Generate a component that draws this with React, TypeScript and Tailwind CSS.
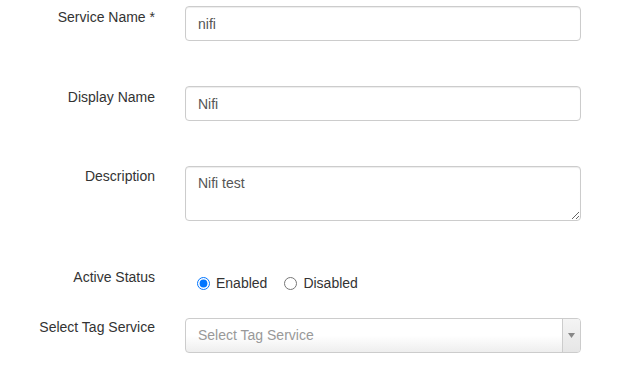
import React from "react";

const font = { fontFamily: '"Liberation Sans", Arial, sans-serif' };

export default function App() {
  return (
    <div className="w-[632px] h-[375px] bg-white overflow-hidden text-[14px] leading-[20px] text-[#333]" style={font}>
      {/* Service Name */}
      <div className="flex items-start mt-[6px]">
        <div className="w-[155px] text-right pt-[1px]">Service Name *</div>
        <input
          readOnly
          defaultValue="nifi"
          className="ml-[30px] w-[396px] h-[35px] px-[12px] border border-[#ccc] rounded-[4px] text-[#555] text-[14px] outline-none shadow-[inset_0_1px_1px_rgba(0,0,0,0.075)]"
          style={font}
        />
      </div>
      {/* Display Name */}
      <div className="flex items-start mt-[45px]">
        <div className="w-[155px] text-right pt-[1px]">Display Name</div>
        <input
          readOnly
          defaultValue="Nifi"
          className="ml-[30px] w-[396px] h-[35px] px-[12px] border border-[#ccc] rounded-[4px] text-[#555] text-[14px] outline-none shadow-[inset_0_1px_1px_rgba(0,0,0,0.075)]"
          style={font}
        />
      </div>
      {/* Description */}
      <div className="flex items-start mt-[45px]">
        <div className="w-[155px] text-right">Description</div>
        <textarea
          readOnly
          defaultValue="Nifi test"
          className="ml-[30px] w-[396px] h-[55px] px-[12px] pt-[6px] pb-[6px] border border-[#ccc] rounded-[4px] text-[#555] text-[14px] leading-[20px] outline-none shadow-[inset_0_1px_1px_rgba(0,0,0,0.075)]"
          style={font}
        />
      </div>
      {/* Active Status */}
      <div className="flex items-start mt-[46px]">
        <div className="w-[155px] text-right">Active Status</div>
        <div className="ml-[42px] pt-[6px] flex items-center text-[#333]">
          <label className="flex items-center">
            <input type="radio" name="status" defaultChecked className="m-0 w-[13px] h-[13px]" />
            <span className="ml-[6px]">Enabled</span>
          </label>
          <label className="flex items-center ml-[17px]">
            <input type="radio" name="status" className="m-0 w-[13px] h-[13px]" />
            <span className="ml-[6px]">Disabled</span>
          </label>
        </div>
      </div>
      {/* Select Tag Service */}
      <div className="flex items-start mt-[24px]">
        <div className="w-[155px] text-right">Select Tag Service</div>
        <div className="ml-[30px] mt-[1px] w-[396px] h-[35px] flex border border-[#ccc] rounded-[4px] bg-gradient-to-b from-white from-50% to-[#eeeeee] overflow-hidden">
          <div className="flex-1 flex items-center pl-[12px] pb-[2px] text-[#999] text-[14px]">Select Tag Service</div>
          <div className="w-[18px] border-l border-[#ccc] flex items-center justify-center bg-gradient-to-b from-[#f4f4f4] to-[#e6e6e6]">
            <svg width="7" height="5" viewBox="0 0 7 5">
              <path d="M0 0 H7 L3.5 5 Z" fill="#888" />
            </svg>
          </div>
        </div>
      </div>
    </div>
  );
}
